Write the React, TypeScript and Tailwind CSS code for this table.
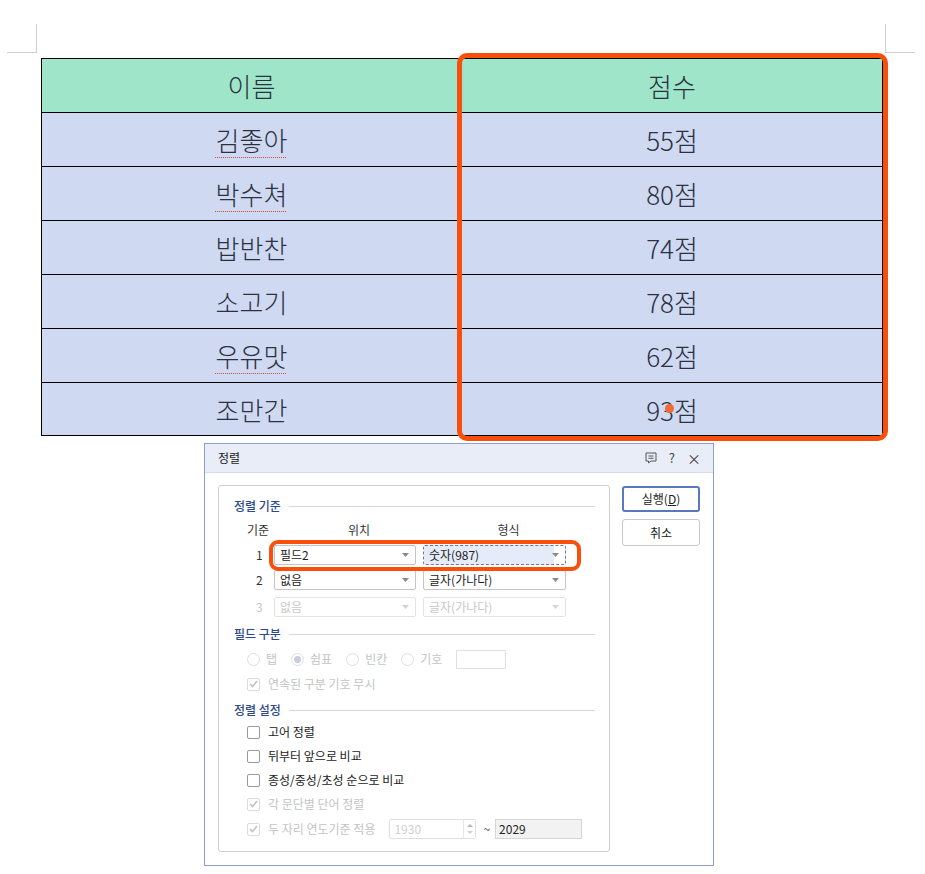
import React from 'react';

const rows = [
  { name: '김좋아', score: '55점', typo: true },
  { name: '박수쳐', score: '80점', typo: true },
  { name: '밥반찬', score: '74점', typo: false },
  { name: '소고기', score: '78점', typo: false },
  { name: '우유맛', score: '62점', typo: true },
  { name: '조만간', score: '93점', typo: false },
];

const Caret = ({ dim }: { dim?: boolean }) => (
  <svg width="7" height="4" viewBox="0 0 7 4" className="shrink-0">
    <path d="M0 0h7L3.5 4z" fill={dim ? '#d4d4d4' : '#8a8a8a'} />
  </svg>
);

const Select = ({ label, w, dim, focus }: { label: string; w: string; dim?: boolean; focus?: boolean }) => (
  <div
    className={`${w} h-[20px] flex items-center justify-between pl-[5px] pr-[6px] rounded-[2px] border ${
      focus ? 'border-dashed border-[#6b7a99] bg-[linear-gradient(90deg,#e6ebfa_92%,#ffffff_92%)]' : dim ? 'border-[#e3e3e3]' : 'border-[#c4c4c4]'
    } ${dim ? 'text-[#c8c8c8]' : 'text-[#222]'}`}
  >
    <span>{label}</span>
    <Caret dim={dim} />
  </div>
);

const Heading = ({ title, className }: { title: string; className: string }) => (
  <div className={`h-[20px] flex items-center gap-[8px] pl-[15px] pr-[14px] ${className}`}>
    <span className="text-[#2c4a8a] font-medium">{title}</span>
    <div className="flex-1 h-px bg-[#d6d6d6]" />
  </div>
);

const Check = ({ checked, dim }: { checked?: boolean; dim?: boolean }) => (
  <div className={`w-[13px] h-[13px] rounded-[2px] border ${dim ? 'border-[#dcdcdc]' : 'border-[#9a9a9a]'} flex items-center justify-center bg-white shrink-0`}>
    {checked && (
      <svg width="9" height="8" viewBox="0 0 9 8">
        <path d="M1 4l2.5 2.5L8 1" stroke="#c2c2c2" strokeWidth="1.6" fill="none" />
      </svg>
    )}
  </div>
);

const Radio = ({ checked, label }: { checked?: boolean; label: string }) => (
  <div className="flex items-center gap-[6px] text-[#c4c4c4]">
    <div className="w-[13px] h-[13px] rounded-full border border-[#dedede] flex items-center justify-center">
      {checked && <div className="w-[7px] h-[7px] rounded-full bg-[#c6cde0]" />}
    </div>
    <span>{label}</span>
  </div>
);

const CheckRow = ({ label, checked, dim, className, children }: { label: string; checked?: boolean; dim?: boolean; className: string; children?: React.ReactNode }) => (
  <div className={`h-[20px] flex items-center pl-[28px] ${className}`}>
    <Check checked={checked} dim={dim} />
    <span className={`ml-[8px] ${dim ? 'text-[#c4c4c4]' : 'text-[#222]'}`}>{label}</span>
    {children}
  </div>
);

export default function App() {
  return (
    <div className="relative w-[925px] h-[874px] bg-white overflow-hidden" style={{ fontFamily: '"Noto Sans CJK KR", "Noto Sans", sans-serif' }}>
      {/* page corner marks */}
      <div className="flex justify-between h-[58px]">
        <div className="ml-[7px] mt-[24px] w-[30px] h-[29px] border-r border-b border-[#cfcfcf]" />
        <div className="mr-[10px] mt-[24px] w-[30px] h-[29px] border-l border-b border-[#cfcfcf]" />
      </div>

      {/* table */}
      <div className="ml-[41px] w-[842px] border border-black text-[26px] font-light text-[#2c3140]">
        <div className="grid grid-cols-[420px_1fr] h-[54px] bg-[#9fe5c9] border-b border-black">
          <div className="flex items-center justify-center border-r border-black">이름</div>
          <div className="flex items-center justify-center">점수</div>
        </div>
        {rows.map((r, i) => (
          <div key={r.name} className={`grid grid-cols-[420px_1fr] bg-[#cfd9f2] ${i < rows.length - 1 ? 'h-[54px] border-b border-black' : 'h-[52px]'}`}>
            <div className="flex items-center justify-center border-r border-black">
              <span className={r.typo ? 'underline decoration-dotted decoration-[#e0463c] decoration-1 underline-offset-[6px]' : ''}>{r.name}</span>
            </div>
            <div className="flex items-center justify-center">{r.score}</div>
          </div>
        ))}
      </div>

      {/* highlight over score column */}
      <div className="absolute left-[457px] top-[53px] w-[431px] h-[388px] border-[5px] border-[#f8500c] rounded-[10px]" />
      <div className="absolute left-[665px] top-[404px] w-[9px] h-[9px] rounded-full bg-[#f26a35]" />

      {/* sort dialog */}
      <div className="ml-[204px] mt-[7px] w-[510px] h-[423px] border border-[#8e9fc8] bg-white text-[12px] text-[#222]">
        <div className="h-[29px] bg-[#e9edf7] border-b border-[#d5dbea] flex items-center justify-between pl-[13px] pr-[12px]">
          <span className="text-[#222]">정렬</span>
          <div className="flex items-center gap-[12px] text-[#444]">
            <svg width="12" height="12" viewBox="0 0 12 12">
              <path d="M1 1h10v8H6l-2.5 2V9H1z" stroke="#555" fill="none" strokeWidth="1" />
              <path d="M3.5 4h5M3.5 6.3h5" stroke="#555" strokeWidth="1" />
            </svg>
            <span className="text-[13px]">?</span>
            <span className="text-[14px]">×</span>
          </div>
        </div>

        <div className="flex pt-[12px] pl-[13px] gap-[12px]">
          {/* group box */}
          <div className="relative w-[392px] h-[367px] border border-[#cfcfcf] rounded-[3px] pt-[10px]">
            <Heading title="정렬 기준" className="" />
            <div className="h-[20px] mt-[4px] flex items-center text-[#333]">
              <span className="w-[69px] pl-[28px]">기준</span>
              <span className="w-[142px] text-center">위치</span>
              <span className="w-[7px]" />
              <span className="w-[143px] text-center">형식</span>
            </div>
            <div className="relative h-[20px] mt-[5px] flex items-center">
              <span className="w-[55px] pl-[37px] text-[#333]">1</span>
              <Select label="필드2" w="w-[142px]" />
              <div className="w-[7px]" />
              <Select label="숫자(987)" w="w-[143px]" focus />
              <div className="absolute left-[50px] top-[-5px] w-[312px] h-[31px] border-[4px] border-[#f8500c] rounded-[9px]" />
            </div>
            <div className="h-[20px] mt-[5px] flex items-center">
              <span className="w-[55px] pl-[37px] text-[#333]">2</span>
              <Select label="없음" w="w-[142px]" />
              <div className="w-[7px]" />
              <Select label="글자(가나다)" w="w-[143px]" />
            </div>
            <div className="h-[20px] mt-[7px] flex items-center">
              <span className="w-[55px] pl-[37px] text-[#c8c8c8]">3</span>
              <Select label="없음" w="w-[142px]" dim />
              <div className="w-[7px]" />
              <Select label="글자(가나다)" w="w-[143px]" dim />
            </div>

            <Heading title="필드 구분" className="mt-[7px]" />
            <div className="h-[20px] mt-[5px] flex items-center pl-[28px] gap-[14px]">
              <Radio label="탭" />
              <Radio label="쉼표" checked />
              <Radio label="빈칸" />
              <Radio label="기호" />
              <div className="w-[50px] h-[19px] border border-[#e0e0e0]" />
            </div>
            <CheckRow label="연속된 구분 기호 무시" checked dim className="mt-[5px]" />

            <Heading title="정렬 설정" className="mt-[6px]" />
            <CheckRow label="고어 정렬" className="mt-[2px]" />
            <CheckRow label="뒤부터 앞으로 비교" className="mt-[4px]" />
            <CheckRow label="종성/중성/초성 순으로 비교" className="mt-[4px]" />
            <CheckRow label="각 문단별 단어 정렬" checked dim className="mt-[4px]" />
            <CheckRow label="두 자리 연도기준 적용" checked dim className="mt-[5px]">
              <div className="ml-[14px] w-[87px] h-[20px] border border-[#e0e0e0] rounded-[2px] flex items-center">
                <span className="flex-1 pl-[4px] text-[#cfcfcf]">1930</span>
                <div className="w-[12px] h-full border-l border-[#e6e6e6] flex flex-col items-center justify-center gap-[4px]">
                  <svg width="6" height="3" viewBox="0 0 6 3"><path d="M0 3L3 0l3 3z" fill="#b5b5b5" /></svg>
                  <svg width="6" height="3" viewBox="0 0 6 3"><path d="M0 0h6L3 3z" fill="#d0d0d0" /></svg>
                </div>
              </div>
              <span className="ml-[7px] mr-[5px] text-[#444]">~</span>
              <div className="w-[87px] h-[20px] border border-[#d6d6d6] bg-[#f2f2f2] flex items-center pl-[3px] text-[#222]">2029</div>
            </CheckRow>
          </div>

          {/* buttons */}
          <div className="flex flex-col gap-[7px] pt-[1px]">
            <div className="w-[78px] h-[26px] border-2 border-[#5a78bd] rounded-[3px] flex items-center justify-center">
              실행(<span className="underline">D</span>)
            </div>
            <div className="w-[78px] h-[27px] border border-[#c9c9c9] rounded-[3px] flex items-center justify-center">취소</div>
          </div>
        </div>
      </div>
    </div>
  );
}
